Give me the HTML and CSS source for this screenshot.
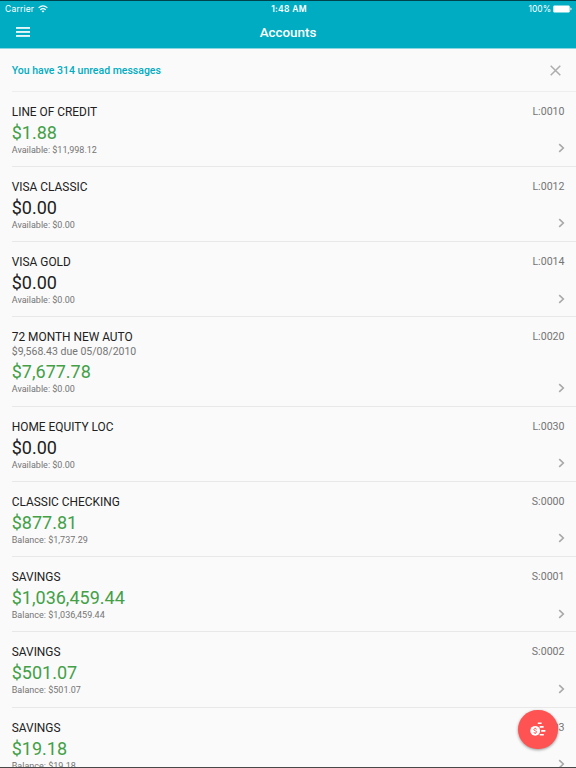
FILE: index.html
```
<!DOCTYPE html>
<html lang="en">
  <head>
    <meta charset="UTF-8" />
    <meta name="viewport" content="width=device-width, initial-scale=1.0" />
    <title>Accounts</title>
    <link rel="stylesheet" href="styles.css">
  </head>
  <body>
    <svg class="symbols" width="0" height="0">
      <symbol id="chevron" viewBox="0 0 7 10">
        <path d="M1.2 1.1 L5.3 5 L1.2 8.9" fill="none" stroke="currentColor" stroke-width="1.6" />
      </symbol>
    </svg>

    <header class="header">
      <div class="status-bar">
        <div class="carrier">
          <span>Carrier</span>
          <svg width="10" height="8" viewBox="0 0 10 8" fill="none" stroke="#fff">
            <path d="M0.6 2.9 Q5 -1 9.4 2.9" stroke-width="1.2" />
            <path d="M2.3 4.7 Q5 2.4 7.7 4.7" stroke-width="1.2" />
            <path d="M5 7.6 L3.5 6.1 Q5 4.9 6.5 6.1 Z" fill="#fff" stroke="none" />
          </svg>
        </div>
        <div class="clock">1:48 AM</div>
        <div class="battery">
          <span>100%</span>
          <svg width="19" height="8" viewBox="0 0 19 8" fill="#fff">
            <rect x="0.3" y="0.6" width="16.4" height="6.8" rx="1.2" />
            <path d="M17.4 2.6 Q18.6 3 18.6 4 Q18.6 5 17.4 5.4 Z" />
          </svg>
        </div>
      </div>
      <div class="nav">
        <svg class="menu" width="14" height="10" viewBox="0 0 14 10" fill="#fff">
          <rect y="0.1" width="14" height="1.7" />
          <rect y="4.1" width="14" height="1.7" />
          <rect y="8.1" width="14" height="1.7" />
        </svg>
        <h1>Accounts</h1>
      </div>
    </header>

    <main>
      <div class="notice">
        <span>You have 314 unread messages</span>
        <svg width="11" height="11" viewBox="0 0 11 11" stroke="#adadad" stroke-width="1.5">
          <path d="M0.7 0.7 L10.3 10.3 M10.3 0.7 L0.7 10.3" />
        </svg>
      </div>

      <ul class="accounts">
        <li class="account">
          <div class="info">
            <div class="name">LINE OF CREDIT</div>
            <div class="amount positive">$1.88</div>
            <div class="sub">Available: $11,998.12</div>
          </div>
          <div class="side">
            <span>L:0010</span>
            <svg class="chevron"><use href="#chevron" /></svg>
          </div>
        </li>
        <li class="account">
          <div class="info">
            <div class="name">VISA CLASSIC</div>
            <div class="amount">$0.00</div>
            <div class="sub">Available: $0.00</div>
          </div>
          <div class="side">
            <span>L:0012</span>
            <svg class="chevron"><use href="#chevron" /></svg>
          </div>
        </li>
        <li class="account">
          <div class="info">
            <div class="name">VISA GOLD</div>
            <div class="amount">$0.00</div>
            <div class="sub">Available: $0.00</div>
          </div>
          <div class="side">
            <span>L:0014</span>
            <svg class="chevron"><use href="#chevron" /></svg>
          </div>
        </li>
        <li class="account">
          <div class="info">
            <div class="name">72 MONTH NEW AUTO</div>
            <div class="due">$9,568.43 due 05/08/2010</div>
            <div class="amount positive">$7,677.78</div>
            <div class="sub">Available: $0.00</div>
          </div>
          <div class="side">
            <span>L:0020</span>
            <svg class="chevron"><use href="#chevron" /></svg>
          </div>
        </li>
        <li class="account">
          <div class="info">
            <div class="name">HOME EQUITY LOC</div>
            <div class="amount">$0.00</div>
            <div class="sub">Available: $0.00</div>
          </div>
          <div class="side">
            <span>L:0030</span>
            <svg class="chevron"><use href="#chevron" /></svg>
          </div>
        </li>
        <li class="account">
          <div class="info">
            <div class="name">CLASSIC CHECKING</div>
            <div class="amount positive">$877.81</div>
            <div class="sub">Balance: $1,737.29</div>
          </div>
          <div class="side">
            <span>S:0000</span>
            <svg class="chevron"><use href="#chevron" /></svg>
          </div>
        </li>
        <li class="account">
          <div class="info">
            <div class="name">SAVINGS</div>
            <div class="amount positive">$1,036,459.44</div>
            <div class="sub">Balance: $1,036,459.44</div>
          </div>
          <div class="side">
            <span>S:0001</span>
            <svg class="chevron"><use href="#chevron" /></svg>
          </div>
        </li>
        <li class="account">
          <div class="info">
            <div class="name">SAVINGS</div>
            <div class="amount positive">$501.07</div>
            <div class="sub">Balance: $501.07</div>
          </div>
          <div class="side">
            <span>S:0002</span>
            <svg class="chevron"><use href="#chevron" /></svg>
          </div>
        </li>
        <li class="account">
          <div class="info">
            <div class="name">SAVINGS</div>
            <div class="amount positive">$19.18</div>
            <div class="sub">Balance: $19.18</div>
          </div>
          <div class="side">
            <span>S:0003</span>
            <svg class="chevron"><use href="#chevron" /></svg>
          </div>
        </li>
      </ul>
    </main>

    <button class="fab" aria-label="Quick pay">
      <svg width="16" height="15" viewBox="0 0 16 15">
        <circle cx="5.2" cy="8.8" r="4.9" fill="#fff" />
        <path d="M6.8 7.4 Q6.2 6.6 5.2 6.6 Q3.8 6.7 3.8 7.7 Q3.9 8.5 5.2 8.8 Q6.7 9.1 6.6 10 Q6.5 11 5.2 11 Q4 11 3.6 10.2 M5.2 5.7 V6.6 M5.2 11 V11.9" fill="none" stroke="#ff5252" stroke-width="0.9" />
        <path d="M7.8 1.3 H11.6 M9.7 4.9 H13.6 M11.2 8.9 H15.4 M9.7 12.8 H13.8" stroke="#fff" stroke-width="1.6" />
      </svg>
    </button>
  </body>
</html>
```
FILE: styles.css
```
* {
  box-sizing: border-box;
}

html,
body {
  height: 100%;
  margin: 0;
  overflow: hidden;
}

body {
  display: flex;
  flex-direction: column;
  font-family: Roboto, "Liberation Sans", sans-serif;
  color: #212121;
  background: #fafafa;
  border-bottom: 1px solid #484848;
}

.symbols {
  position: absolute;
}

.header {
  flex: none;
  height: 49px;
  color: #fff;
  background: #00acc1;
  border-top: 1px solid #00434c;
  border-bottom: 1px solid #8ad6e0;
}

.status-bar {
  display: grid;
  grid-template-columns: 1fr auto 1fr;
  align-items: center;
  height: 15px;
  padding: 0 4px 0 5px;
  font-family: Inter, sans-serif;
  font-size: 8.5px;
  letter-spacing: 0.2px;
}

.carrier,
.battery {
  display: flex;
  align-items: center;
  gap: 4px;
}

.battery {
  justify-content: flex-end;
  gap: 2px;
  letter-spacing: 0;
}

.clock {
  padding-left: 1px;
  font-weight: 600;
  letter-spacing: 0.3px;
}

.nav {
  display: grid;
  grid-template-columns: 1fr auto 1fr;
  align-items: center;
  height: 32px;
  padding: 0 16px;
}

h1 {
  margin: 0;
  font-size: 13.4px;
  font-weight: 500;
}

main {
  flex: 1;
  min-height: 0;
  overflow: hidden;
}

.notice {
  display: flex;
  align-items: center;
  justify-content: space-between;
  height: 42.5px;
  margin-left: 11.75px;
  padding: 1.5px 15px 0 0;
  font-size: 10.5px;
  font-weight: 500;
  color: #00acc1;
  border-bottom: 1px solid #eee;
}

.accounts {
  margin: 0;
  padding: 0;
  list-style: none;
}

.account {
  display: flex;
  justify-content: space-between;
  margin-left: 11.75px;
  padding: 12px 11.5px 11.25px 0;
  border-bottom: 1px solid #e8e8e8;
}

.name {
  font-size: 11.9px;
  line-height: 16px;
}

.due {
  font-size: 10.5px;
  line-height: 14px;
  color: #757575;
}

.amount {
  font-size: 18px;
  line-height: 26px;
}

.positive {
  color: #43a047;
}

.sub {
  font-size: 9px;
  line-height: 9px;
  color: #757575;
}

.side {
  display: flex;
  flex-direction: column;
  align-items: flex-end;
  justify-content: space-between;
  padding-bottom: 1.5px;
  font-size: 10.6px;
  line-height: 16px;
  color: #757575;
}

.chevron {
  width: 7px;
  height: 10px;
  color: #a8a8a8;
}

.fab {
  position: absolute;
  right: 18.5px;
  bottom: 19px;
  display: flex;
  align-items: center;
  justify-content: center;
  width: 39.5px;
  height: 39.5px;
  padding: 0;
  background: #ff5252;
  border: none;
  border-radius: 50%;
  box-shadow: 0 1px 3px rgba(0, 0, 0, 0.4);
}
```
